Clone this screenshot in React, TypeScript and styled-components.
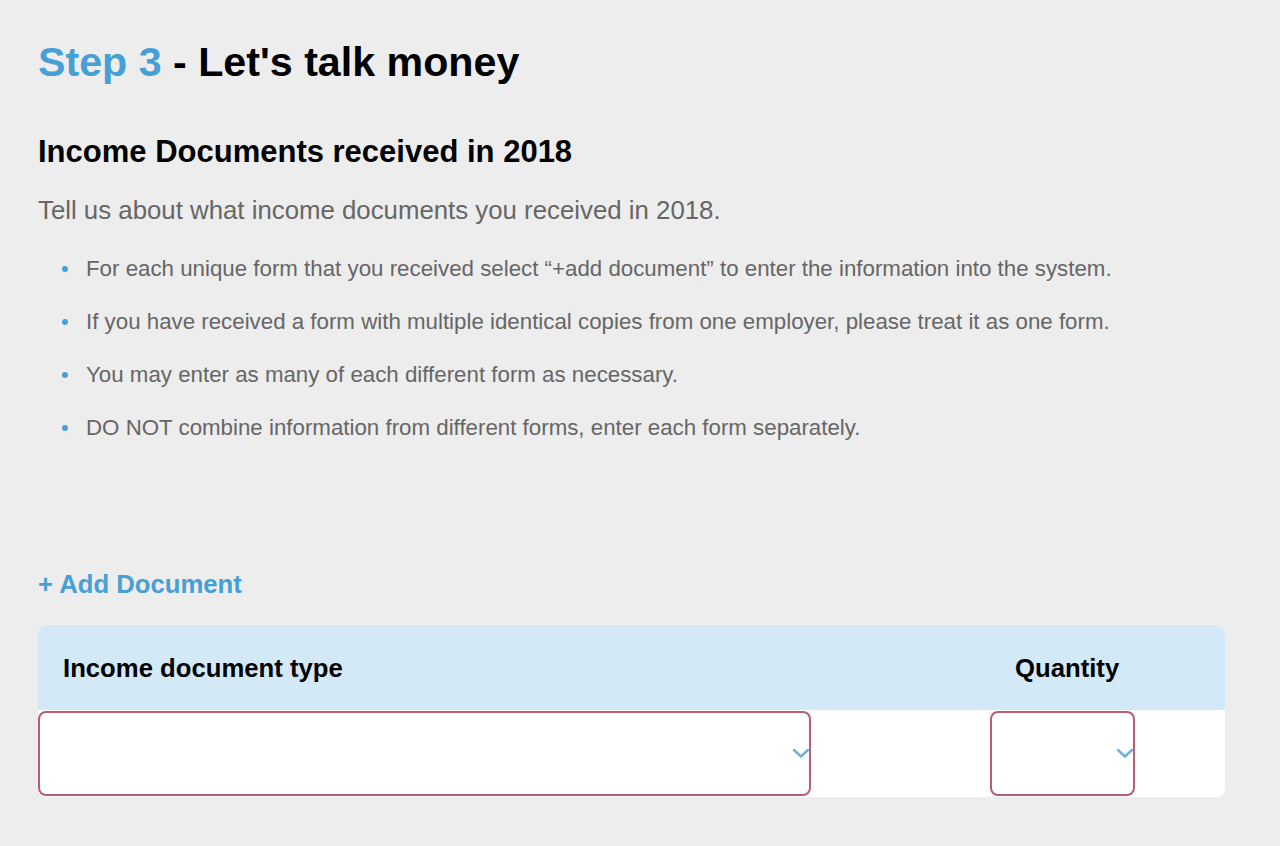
import styled, { createGlobalStyle } from 'styled-components'

const GlobalStyle = createGlobalStyle`
    html, body {
        margin: 0;
        padding: 0;
        background: #ededed;
        font-family: "Liberation Sans", Arial, sans-serif;
    }
`

const Page = styled.main`
    min-height: 846px;
    box-sizing: border-box;
    padding: 38px 55px 40px 38px;
`

const Title = styled.h1`
    margin: 0;
    font-size: 41.2px;
    line-height: 48px;
    font-weight: 700;
    color: #000;
`

const StepLabel = styled.span`
    color: #469fd5;
`

const SectionTitle = styled.h2`
    margin: 48px 0 0;
    font-size: 31px;
    line-height: 36px;
    font-weight: 700;
    color: #000;
`

const Intro = styled.p`
    margin: 25px 0 0;
    font-size: 25.8px;
    line-height: 30px;
    color: #666;
`

const Bullets = styled.ul`
    margin: 17px 0 0;
    padding: 0 0 0 48px;
    list-style: none;
`

const Bullet = styled.li`
    position: relative;
    font-size: 22.3px;
    line-height: 53px;
    color: #666;

    &::before {
        content: '';
        position: absolute;
        left: -24px;
        top: 24px;
        width: 6px;
        height: 6px;
        border-radius: 50%;
        background: #469fd5;
    }
`

const AddButton = styled.button`
    display: block;
    margin: 115px 0 0;
    padding: 0;
    border: none;
    background: none;
    font-family: inherit;
    font-size: 25.7px;
    line-height: 30px;
    font-weight: 700;
    color: #469fd5;
    cursor: pointer;
`

const Table = styled.section`
    margin-top: 26px;
`

const HeaderRow = styled.div`
    display: grid;
    grid-template-columns: 952px 1fr;
    align-items: center;
    height: 85px;
    background: #d3e9f8;
    border-radius: 9px 9px 0 0;
`

const HeaderCell = styled.div`
    padding-left: 25px;
    padding-top: 2px;
    font-size: 25.7px;
    font-weight: 700;
    color: #000;
`

const BodyRow = styled.div`
    display: grid;
    grid-template-columns: 952px 1fr;
    padding: 1px 0;
    background: #fff;
    border-radius: 0 0 8px 8px;
`

const SelectBox = styled.div<{ $width: number }>`
    position: relative;
    box-sizing: border-box;
    width: ${(p) => p.$width}px;
    height: 85px;
    background: #fff;
    border: 2px solid #b95c76;
    border-radius: 8px;
`

const Chevron = styled.svg`
    position: absolute;
    right: -1px;
    top: 34px;
    width: 18px;
    height: 12px;
`

const ChevronIcon = () => (
    <Chevron viewBox="0 0 18 12" fill="none">
        <path
            d="M2 3 L9 9.5 L16 3"
            stroke="#6eb1dc"
            strokeWidth="2.4"
            strokeLinecap="round"
            strokeLinejoin="round"
        />
    </Chevron>
)

const bullets = [
    'For each unique form that you received select \u201c+add document\u201d to enter the information into the system.',
    'If you have received a form with multiple identical copies from one employer, please treat it as one form.',
    'You may enter as many of each different form as necessary.',
    'DO NOT combine information from different forms, enter each form separately.',
]

export default function App() {
    return (
        <>
            <GlobalStyle />
            <Page>
                <Title>
                    <StepLabel>Step 3</StepLabel> - Let's talk money
                </Title>
                <SectionTitle>Income Documents received in 2018</SectionTitle>
                <Intro>Tell us about what income documents you received in 2018.</Intro>
                <Bullets>
                    {bullets.map((text) => (
                        <Bullet key={text}>{text}</Bullet>
                    ))}
                </Bullets>
                <AddButton>+ Add Document</AddButton>
                <Table>
                    <HeaderRow>
                        <HeaderCell>Income document type</HeaderCell>
                        <HeaderCell>Quantity</HeaderCell>
                    </HeaderRow>
                    <BodyRow>
                        <SelectBox $width={773}>
                            <ChevronIcon />
                        </SelectBox>
                        <SelectBox $width={145}>
                            <ChevronIcon />
                        </SelectBox>
                    </BodyRow>
                </Table>
            </Page>
        </>
    )
}
